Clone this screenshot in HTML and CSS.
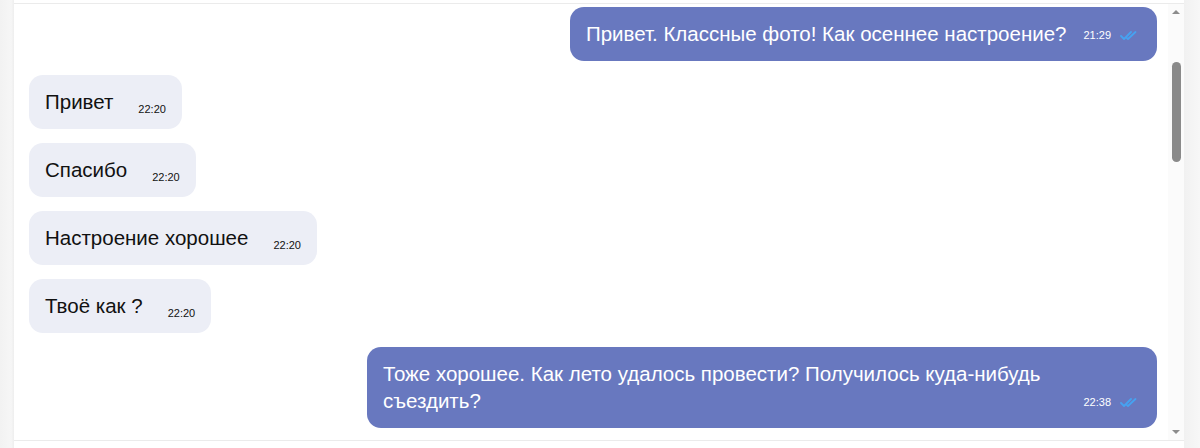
FILE: index.html
```html
<!DOCTYPE html>
<html lang="ru">
<head>
<meta charset="utf-8">
<title>Чат</title>
<link rel="stylesheet" href="styles.css">
</head>
<body>
<div class="page">
  <div class="side side-left"></div>
  <div class="panel">
    <div class="chat">
      <div class="messages">
        <div class="row out">
          <div class="bubble bubble-out">
            <span class="text">Привет. Классные фото! Как осеннее настроение?</span><span class="meta"><span class="time">21:29</span><svg class="check" width="17" height="9" viewBox="0 0 17 9"><path d="M1 5 L4 8 L11 1 M6.5 6.5 L8 8 L15.5 1" fill="none" stroke="#46a2f0" stroke-width="1.8" stroke-linecap="round" stroke-linejoin="round"/></svg></span>
          </div>
        </div>
        <div class="row in">
          <div class="bubble bubble-in"><span class="text">Привет</span><span class="meta"><span class="time">22:20</span></span></div>
        </div>
        <div class="row in">
          <div class="bubble bubble-in"><span class="text">Спасибо</span><span class="meta"><span class="time">22:20</span></span></div>
        </div>
        <div class="row in">
          <div class="bubble bubble-in"><span class="text">Настроение хорошее</span><span class="meta"><span class="time">22:20</span></span></div>
        </div>
        <div class="row in">
          <div class="bubble bubble-in"><span class="text">Твоё как ?</span><span class="meta"><span class="time">22:20</span></span></div>
        </div>
        <div class="row out">
          <div class="bubble bubble-out bubble-wide">
            <span class="text">Тоже хорошее. Как лето удалось провести? Получилось куда-нибудь съездить?</span><span class="meta"><span class="time">22:38</span><svg class="check" width="17" height="9" viewBox="0 0 17 9"><path d="M1 5 L4 8 L11 1 M6.5 6.5 L8 8 L15.5 1" fill="none" stroke="#46a2f0" stroke-width="1.8" stroke-linecap="round" stroke-linejoin="round"/></svg></span>
          </div>
        </div>
      </div>
      <div class="scrollbar">
        <div class="arrow arrow-up"></div>
        <div class="track"><div class="thumb"></div></div>
        <div class="arrow arrow-down"></div>
      </div>
    </div>
  </div>
  <div class="side side-right"></div>
</div>
</body>
</html>
```

FILE: styles.css
```css
* { box-sizing: border-box; }
html, body { margin: 0; padding: 0; }
body {
  background: #ffffff;
  font-family: "Liberation Sans", Arial, sans-serif;
  width: 1200px;
  height: 448px;
  overflow: hidden;
}
.page {
  display: flex;
  height: 448px;
}
.side-left {
  width: 14px;
  background: linear-gradient(to right, #f2f2f2, #f6f6f6 80%, #eeeeee);
}
.side-right {
  width: 16px;
  background: linear-gradient(to right, #f1f1f1, #f7f7f7);
}
.panel {
  flex: 1;
  background: #ffffff;
  padding-top: 3px;
}
.chat {
  display: flex;
  border-top: 1px solid #ebebeb;
  border-bottom: 1px solid #ebebeb;
  height: 438px;
}
.messages {
  flex: 1;
  padding: 3px 11px 0 15px;
  display: flex;
  flex-direction: column;
  gap: 14px;
}
.row { display: flex; }
.row.out { justify-content: flex-end; }
.row.in { justify-content: flex-start; }
.bubble {
  display: flex;
  align-items: flex-end;
  border-radius: 14px;
  font-size: 20.5px;
  line-height: 27px;
  padding: 13px 16px 14px 16px;
}
.bubble-out {
  background: #6878bf;
  color: #ffffff;
  padding-right: 20px;
}
.bubble-in {
  background: #eceef6;
  color: #111111;
}
.bubble-wide {
  width: 790px;
  justify-content: space-between;
}
.meta {
  display: flex;
  align-items: flex-end;
  flex-shrink: 0;
  white-space: nowrap;
  margin-left: 17px;
  margin-bottom: 6px;
}
.bubble-in .meta {
  margin-left: 25px;
  margin-bottom: 0;
}
.time {
  font-size: 11px;
  line-height: 11px;
}
.bubble-out .time { color: #ffffff; }
.check {
  margin-left: 9px;
  margin-bottom: 1px;
}
.scrollbar {
  width: 16px;
  background: #fbfbfb;
  display: flex;
  flex-direction: column;
  align-items: center;
}
.arrow {
  width: 0;
  height: 0;
  border-left: 4px solid transparent;
  border-right: 4px solid transparent;
}
.arrow-up {
  border-bottom: 4px solid #8c8c8c;
  margin-top: 6px;
}
.arrow-down {
  border-top: 4px solid #8c8c8c;
  margin-bottom: 6px;
}
.track {
  flex: 1;
  width: 100%;
  padding-top: 48px;
  display: flex;
  justify-content: center;
}
.thumb {
  width: 9px;
  height: 100px;
  border-radius: 5px;
  background: #8a8a8a;
}
```
